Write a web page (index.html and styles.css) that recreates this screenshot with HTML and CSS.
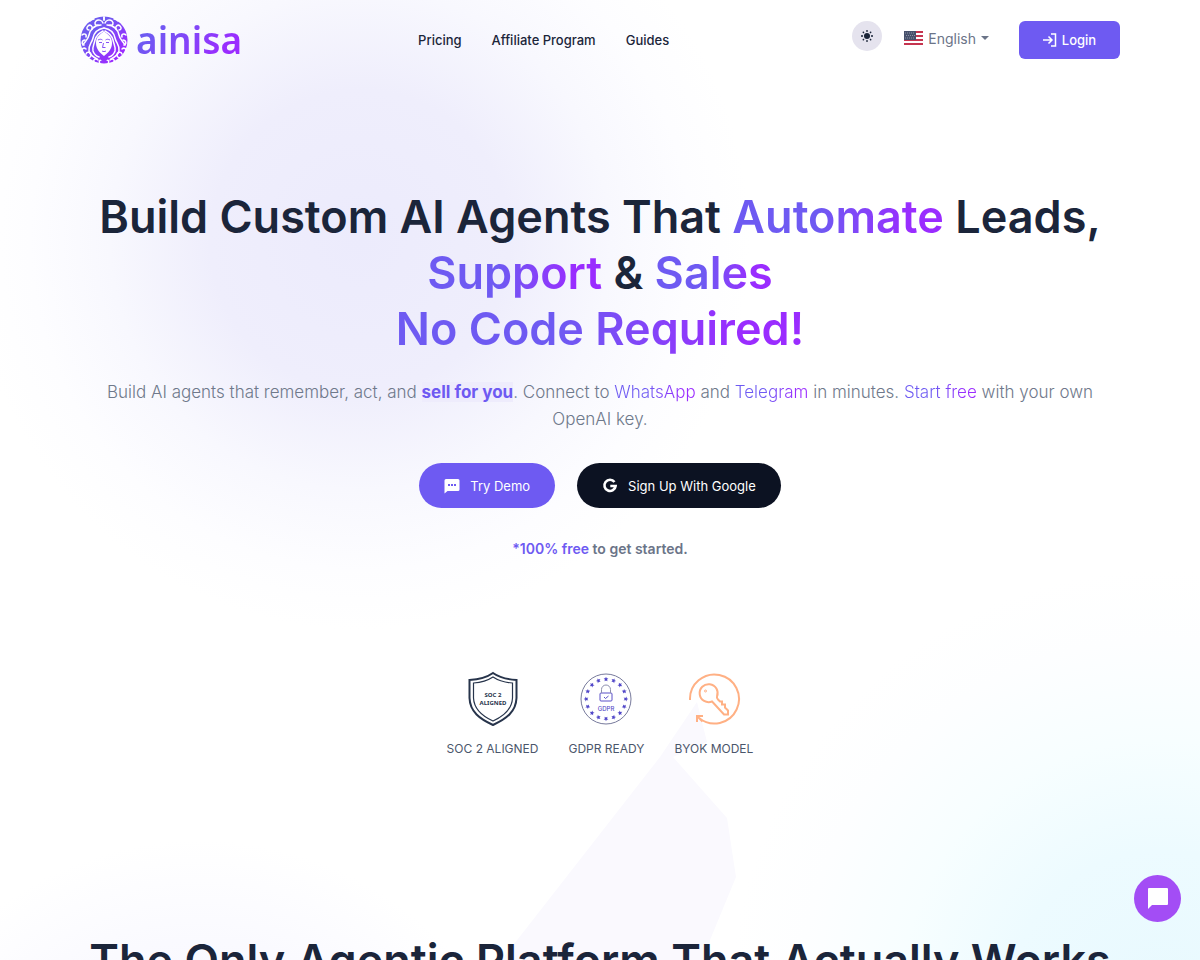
FILE: index.html
```html
<!DOCTYPE html>
<html lang="en">
<head>
  <meta charset="UTF-8">
  <meta name="viewport" content="width=device-width, initial-scale=1.0">
  <title>ainisa</title>
  <link rel="stylesheet" href="styles.css">
</head>
<body>
  <header class="header">
    <a class="logo" href="#">
      <svg class="logo-mark" viewBox="0 0 48 48" aria-hidden="true">
        <defs>
          <linearGradient id="mark" x1="0" y1="0" x2="1" y2="1">
            <stop offset="0.3" stop-color="#6e5af0"/>
            <stop offset="0.8" stop-color="#9a2cff"/>
          </linearGradient>
        </defs>
        <circle cx="24" cy="24" r="23.5" fill="url(#mark)"/>
        <g id="half" fill="none" stroke="#fff" stroke-width="1.5" stroke-linecap="round">
          <path d="M24 12c-6 1-10 5-11 10-1 5-5 7-4 13 1 4 4 6 8 8"/>
          <path d="M23 15c-4 2-7 5-8 9-1 5-3 7-2 11 1 3 3 5 6 6"/>
          <path d="M21 9c-7 0-11 5-12 10-1 5-4 6-6 10"/>
          <path d="M23 7c-1-3-5-4-7-2s-1 5 2 4M24 1v3"/>
          <path d="M12 13c1-3-2-5-4-3s-1 4 1 4M14 3c-2 0-3 1-4 2"/>
          <path d="M6 21c1-3-2-4-4-2M5 24c-3 0-4 4-1 5"/>
          <path d="M6 33c-2-2-5 0-4 2M6 38c1-3 5-2 5 1s-3 3-4 2"/>
          <path d="M14 46c-1-3 2-4 4-2M21 44c-2 0-2 2-1 4"/>
        </g>
        <use href="#half" transform="matrix(-1 0 0 1 48 0)"/>
        <path d="M24 15c-4 4-8 5-8 12 0 6 4 10 8 13 4-3 8-7 8-13 0-7-4-8-8-12z" fill="#fff"/>
        <path d="M18 24c2-1 3-1 4.500 0M25.500 24c1.500-1 2.500-1 4.500 0M19 26.500h3M26 26.500h3M23.500 27l-1 4.500h3M22 35c1 .700 3 .700 4 0" fill="none" stroke="#793ff5" stroke-width="0.900"/>
        <path d="M20 40c2 2 6 2 8 0v3c-2 2-6 2-8 0z" fill="#9234fb"/>
      </svg>
      <span class="logo-text">ainisa</span>
    </a>
    <nav class="nav">
      <a href="#">Pricing</a>
      <a href="#">Affiliate Program</a>
      <a href="#">Guides</a>
    </nav>
    <div class="actions">
      <button class="theme" aria-label="Toggle theme">
        <svg viewBox="0 0 12 12" width="12" height="12"><circle cx="6" cy="6" r="3" fill="#1a2438"/><path d="M6 0v2M6 10v2M0 6h2M10 6h2M1.800 1.800l1.200 1.200M9 9l1.200 1.200M10.200 1.800L9 3M3 9l-1.200 1.200" stroke="#1a2438" stroke-width="1.300"/></svg>
      </button>
      <button class="lang">
        <svg viewBox="0 0 19 15" width="19" height="15" aria-hidden="true">
          <path fill="#fff" d="M0 0h19v15H0z"/>
          <path d="M0 1h19M0 5h19M0 9h19M0 13h19" stroke="#c5344f" stroke-width="2"/>
          <path fill="#46506b" d="M0 0h12v9H0z"/>
          <path d="M1 2h10M2 4.500h9M1 7h10" stroke="#8c93a5" stroke-width="1" stroke-dasharray="1 1"/>
        </svg>
        English
        <span class="caret"></span>
      </button>
      <a class="login" href="#">
        <svg viewBox="0 0 14 14" width="14" height="14" fill="none" stroke="#fff" stroke-width="1.500" aria-hidden="true"><path d="M0 7h8.500M5.500 3.500L9 7l-3.500 3.500M8 1h4.500v12H8"/></svg>
        Login
      </a>
    </div>
  </header>

  <main>
    <section class="hero">
      <h1>Build Custom AI Agents That <span class="grad">Automate</span> Leads,
        <span class="grad">Support</span> &amp; <span class="grad">Sales</span><br>
        <span class="grad">No Code Required!</span></h1>
      <p class="lead">Build AI agents that remember, act, and <strong>sell for you</strong>. Connect to <a class="grad" href="#">WhatsApp</a> and <a class="grad" href="#">Telegram</a> in minutes. <a class="grad" href="#">Start free</a> with your own OpenAI key.</p>
      <div class="cta">
        <a class="btn btn-demo" href="#">
          <svg viewBox="0 0 16 16" width="16" height="16" aria-hidden="true"><path d="M2 1h12q1.500 0 1.500 1.500v9q0 1.500-1.500 1.500H3.500L.5 15.500v-13Q.5 1 2 1z" fill="#fff"/><path d="M4 6h2v2H4zM7 6h2v2H7zM10 6h2v2h-2z" fill="#6e5af2"/></svg>
          Try Demo
        </a>
        <a class="btn btn-google" href="#">
          <svg viewBox="0 0 16 16" width="16" height="16" aria-hidden="true"><path d="M12.500 4A5.600 5.600 0 1 0 13.600 8H8.300" fill="none" stroke="#fff" stroke-width="2.600"/></svg>
          Sign Up With Google
        </a>
      </div>
      <p class="note"><span>*100% free</span> to get started.</p>
    </section>

    <section class="badges">
      <div class="badge">
        <svg viewBox="0 0 56 56" width="56" height="56" fill="none" stroke="#27344b" aria-hidden="true">
          <path d="M28 2C21 7 13 8.500 4.500 9v18C5 41 15 48 28 54c13-6 23-13 23.500-27V9C43 8.500 35 7 28 2z" stroke-width="2"/>
          <path d="M28 6c-6 4-12 5.500-19.500 6v15C9 38 17 45 28 50c11-5 19-12 19.500-23V12C40 11.500 34 10 28 6z" stroke-width="1.200"/>
          <text class="badge-soc" x="28" y="26">SOC 2</text>
          <text class="badge-soc" x="28" y="34">ALIGNED</text>
        </svg>
        <span>SOC 2 ALIGNED</span>
      </div>
      <div class="badge">
        <svg viewBox="0 0 56 56" width="56" height="56" fill="none" stroke="#5b50c8" aria-hidden="true">
          <defs><path id="star" d="M28 5.700l.7 1.600 1.700.1-1.300 1.200.4 1.700-1.500-.9-1.500.9.4-1.700-1.300-1.200 1.700-.1z" fill="#5046c8" stroke="none"/></defs>
          <circle cx="28" cy="28" r="25" stroke-width="1" stroke="#777a9c"/>
          <use href="#star"/>
          <use href="#star" transform="rotate(22.500 28 28)"/>
          <use href="#star" transform="rotate(45 28 28)"/>
          <use href="#star" transform="rotate(67.500 28 28)"/>
          <use href="#star" transform="rotate(90 28 28)"/>
          <use href="#star" transform="rotate(112.500 28 28)"/>
          <use href="#star" transform="rotate(135 28 28)"/>
          <use href="#star" transform="rotate(157.500 28 28)"/>
          <use href="#star" transform="rotate(180 28 28)"/>
          <use href="#star" transform="rotate(202.500 28 28)"/>
          <use href="#star" transform="rotate(225 28 28)"/>
          <use href="#star" transform="rotate(247.500 28 28)"/>
          <use href="#star" transform="rotate(270 28 28)"/>
          <use href="#star" transform="rotate(292.500 28 28)"/>
          <use href="#star" transform="rotate(315 28 28)"/>
          <use href="#star" transform="rotate(337.500 28 28)"/>
          <rect x="22" y="22" width="12" height="8" rx="1"/>
          <path d="M23.500 22v-3.500a4.500 4.500 0 0 1 9 0V22" stroke="#8d8fae"/>
          <path d="M26 26l1.500 1.500L30.500 25"/>
          <text class="badge-gdpr" x="28" y="40">GDPR</text>
        </svg>
        <span>GDPR READY</span>
      </div>
      <div class="badge">
        <svg viewBox="0 0 56 56" width="56" height="56" fill="none" stroke="#ffb084" stroke-width="2" aria-hidden="true">
          <path d="M4 29A24.500 24.500 0 1 1 13 47M11 51v-6h6M11.500 45.500l5 5"/>
          <path d="M26 30.500a9 9 0 1 1 5-5c-.5 1.500 0 2 1 3l2 2h2v3h3v3l3 3v4h-4L27 31.500z"/>
          <circle cx="19.500" cy="20" r="1" stroke-width="1"/>
        </svg>
        <span>BYOK MODEL</span>
      </div>
    </section>

    <section class="platform">
      <h2>The Only Agentic Platform That Actually Works</h2>
    </section>
  </main>

  <svg class="shape" viewBox="0 0 260 300" aria-hidden="true"><path d="M197 12L160 67 0 272v28h205l5-50 26-63-9-59-54-61 34-15z" fill="#faf9fe"/></svg>
  <button class="chat" aria-label="Open chat">
    <svg viewBox="0 0 20 22" width="20" height="22"><path d="M1 0h18q1 0 1 1v15q0 1-1 1H4L0 21V1q0-1 1-1z" fill="#fff"/></svg>
  </button>
</body>
</html>
```

FILE: styles.css
```css
* {
  box-sizing: border-box;
}
body {
  position: relative;
  height: 100vh;
  margin: 0;
  overflow: hidden;
  font-family: Inter, "Liberation Sans", sans-serif;
  color: #1b253a;
  background:
    radial-gradient(circle at 360px 240px, #ecebfc 0, #efeefc 150px, #f8f8fe 250px, #fdfdff 330px, transparent 390px),
    radial-gradient(circle at 1160px 1000px, #e8f9fe 0, #edfbff 150px, #f7feff 260px, #fdfeff 360px, transparent 430px),
    radial-gradient(circle at 200px 1180px, #f2f1fd 0, #fafaff 240px, transparent 340px),
    #fff;
}
a {
  color: inherit;
  text-decoration: none;
}
button {
  border: 0;
  padding: 0;
  font-family: inherit;
  cursor: pointer;
}
.header {
  display: flex;
  align-items: center;
  height: 80px;
  padding: 0 80px;
}
.logo {
  display: flex;
  align-items: center;
  gap: 8px;
}
.logo-mark {
  width: 48px;
  height: 48px;
}
.logo-text {
  font-family: "Noto Sans", sans-serif;
  font-size: 37px;
  font-weight: 600;
  line-height: 48px;
  background: linear-gradient(135deg, #6e5af2 20%, #9a2cff 80%);
  background-clip: text;
  color: transparent;
}
.nav {
  display: flex;
  gap: 30px;
  margin-left: 176px;
  font-size: 13px;
  font-weight: 500;
}
.actions {
  display: flex;
  align-items: flex-start;
  margin-left: auto;
}
.theme {
  display: grid;
  place-items: center;
  width: 30px;
  height: 30px;
  margin-right: 22px;
  border-radius: 50%;
  background: #e5e3ee;
}
.lang {
  display: flex;
  align-items: center;
  gap: 5px;
  height: 34px;
  margin-right: 30px;
  background: none;
  color: #6b7488;
  font-size: 14px;
}
.caret {
  border: 4px solid transparent;
  border-top-color: currentColor;
  border-bottom: 0;
}
.login {
  display: flex;
  align-items: center;
  justify-content: center;
  gap: 5px;
  width: 101px;
  height: 38px;
  border-radius: 6px;
  background: #6e5af2;
  color: #fff;
  font-size: 13px;
  font-weight: 500;
}
.hero {
  padding: 109px 80px 0;
  text-align: center;
}
h1,
h2 {
  margin: 0;
  font-size: 45px;
  font-weight: 600;
  line-height: 56px;
}
.grad {
  background: linear-gradient(90deg, #6e5af2 40%, #9a2cff 85%);
  background-clip: text;
  color: transparent;
}
.lead {
  margin: 22px 0 30px;
  color: #6f798b;
  font-size: 17px;
  font-weight: 300;
  line-height: 27px;
}
.lead strong {
  background: #eeecfc;
  color: #6e5af2;
  font-weight: 700;
}
.cta {
  display: flex;
  justify-content: center;
  gap: 22px;
}
.btn {
  display: flex;
  align-items: center;
  gap: 10px;
  height: 45px;
  padding: 0 25px;
  border-radius: 23px;
  color: #fff;
  font-size: 13px;
}
.btn-demo {
  background: #6e5af2;
}
.btn-google {
  background: #0c1222;
}
.note {
  margin: 30px 0 0;
  color: #6b7488;
  font-size: 14px;
  font-weight: 600;
  line-height: 22px;
}
.note span {
  color: #6e5af2;
}
.badges {
  display: flex;
  justify-content: center;
  gap: 30px;
  padding-top: 111px;
}
.badge {
  display: flex;
  flex-direction: column;
  align-items: center;
  gap: 12px;
  color: #4b566b;
  font-size: 12px;
  line-height: 20px;
}
.badge text {
  stroke: none;
  text-anchor: middle;
}
.badge-soc {
  fill: #27344b;
  font: 700 6px "Noto Sans", sans-serif;
}
.badge-gdpr {
  fill: #5b50c8;
  font: 500 6px Inter, sans-serif;
}
.platform {
  padding-top: 174px;
  text-align: center;
}
.shape {
  position: absolute;
  z-index: -1;
  left: 500px;
  top: 690px;
  width: 260px;
}
.chat {
  position: fixed;
  right: 19px;
  bottom: 38px;
  display: grid;
  place-items: center;
  width: 47px;
  height: 47px;
  border-radius: 50%;
  background: #a34df5;
}
```
